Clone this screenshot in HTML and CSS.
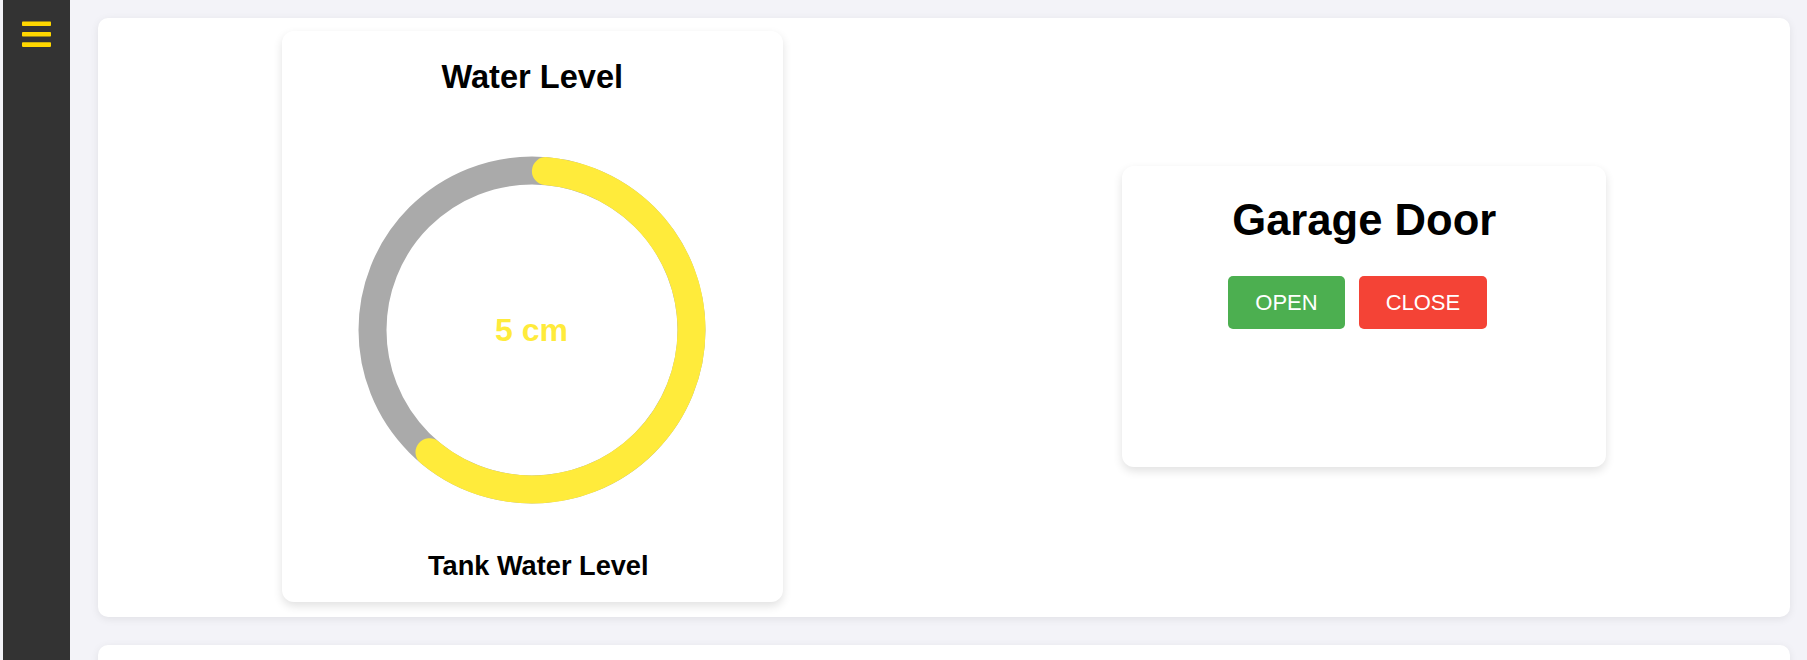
FILE: index.html
```html
<!DOCTYPE html>
<html lang="en">
<head>
<meta charset="utf-8">
<title>Dashboard</title>
<link rel="stylesheet" href="styles.css">
</head>
<body>
  <aside class="sidebar">
    <button class="menu-btn" aria-label="Menu">
      <svg width="30" height="27" viewBox="0 0 30 27">
        <rect x="0" y="0.5" width="29" height="4.6" rx="0.8" fill="#FFD700"/>
        <rect x="0" y="11" width="29" height="4.6" rx="0.8" fill="#FFD700"/>
        <rect x="0" y="21.3" width="29" height="4.6" rx="0.8" fill="#FFD700"/>
      </svg>
    </button>
  </aside>
  <main class="main">
    <section class="panel panel-top">
      <div class="card water-card">
        <h2 class="water-title">Water Level</h2>
        <svg class="gauge" width="360" height="360" viewBox="0 0 360 360">
          <circle cx="180" cy="180" r="159.5" fill="none" stroke="#AAAAAA" stroke-width="28"/>
          <path d="M193.9 21.1 A159.5 159.5 0 1 1 77.5 302.2" fill="none" stroke="#FFEB3B" stroke-width="28" stroke-linecap="round"/>
          <text x="179.5" y="191" text-anchor="middle" class="gauge-value">5 cm</text>
        </svg>
        <div class="water-label">Tank Water Level</div>
      </div>
      <div class="card garage-card">
        <h1 class="garage-title">Garage Door</h1>
        <div class="btn-row">
          <button class="btn btn-open">OPEN</button>
          <button class="btn btn-close">CLOSE</button>
        </div>
      </div>
    </section>
    <section class="panel panel-next"></section>
  </main>
</body>
</html>
```

FILE: styles.css
```css
* {
  box-sizing: border-box;
}

html, body {
  margin: 0;
  padding: 0;
}

body {
  display: flex;
  align-items: stretch;
  background: #f3f3f8;
  font-family: "Liberation Sans", Arial, sans-serif;
  color: #000;
  min-height: 100vh;
  overflow: hidden;
}

.sidebar {
  width: 67px;
  margin-left: 3px;
  background: #333333;
  flex-shrink: 0;
  padding: 21px 0 0 19px;
}

.menu-btn {
  display: block;
  padding: 0;
  margin: 0;
  border: none;
  background: none;
  cursor: pointer;
  line-height: 0;
}

.main {
  flex: 1;
  padding: 18px 17px 0 28px;
  display: flex;
  flex-direction: column;
  gap: 28px;
}

.panel {
  background: #fff;
  border-radius: 10px;
  box-shadow: 0 2px 8px rgba(0, 0, 0, 0.08);
}

.panel-top {
  display: flex;
  justify-content: space-around;
  align-items: center;
  padding: 13px 14px 15px;
}

.panel-next {
  height: 300px;
}

.card {
  background: #fff;
  border-radius: 12px;
  box-shadow: 0 4px 10px rgba(0, 0, 0, 0.12);
}

.water-card {
  width: 501px;
  height: 571px;
  padding-top: 27px;
  display: flex;
  flex-direction: column;
  align-items: center;
}

.water-title {
  margin: 0;
  font-size: 32.6px;
  line-height: 37px;
  font-weight: bold;
}

.gauge {
  display: block;
  margin-top: 55px;
}

.gauge-value {
  font-family: "Liberation Sans", Arial, sans-serif;
  font-size: 32px;
  font-weight: bold;
  fill: #FFEB3B;
}

.water-label {
  margin-top: 40px;
  padding-left: 12px;
  font-size: 27.2px;
  line-height: 31px;
  font-weight: bold;
}

.garage-card {
  width: 484px;
  height: 301px;
  padding-top: 30px;
  display: flex;
  flex-direction: column;
  align-items: center;
}

.garage-title {
  margin: 0;
  font-size: 43.6px;
  line-height: 49px;
  font-weight: bold;
}

.btn-row {
  margin-top: 31px;
  display: flex;
  gap: 14px;
  padding-right: 13px;
}

.btn {
  border: none;
  border-radius: 5px;
  color: #fff;
  font-family: "Liberation Sans", Arial, sans-serif;
  font-size: 22px;
  line-height: 25px;
  padding: 14px 27px;
  cursor: pointer;
}

.btn-open {
  background: #4CAF50;
}

.btn-close {
  background: #F44336;
}
```
